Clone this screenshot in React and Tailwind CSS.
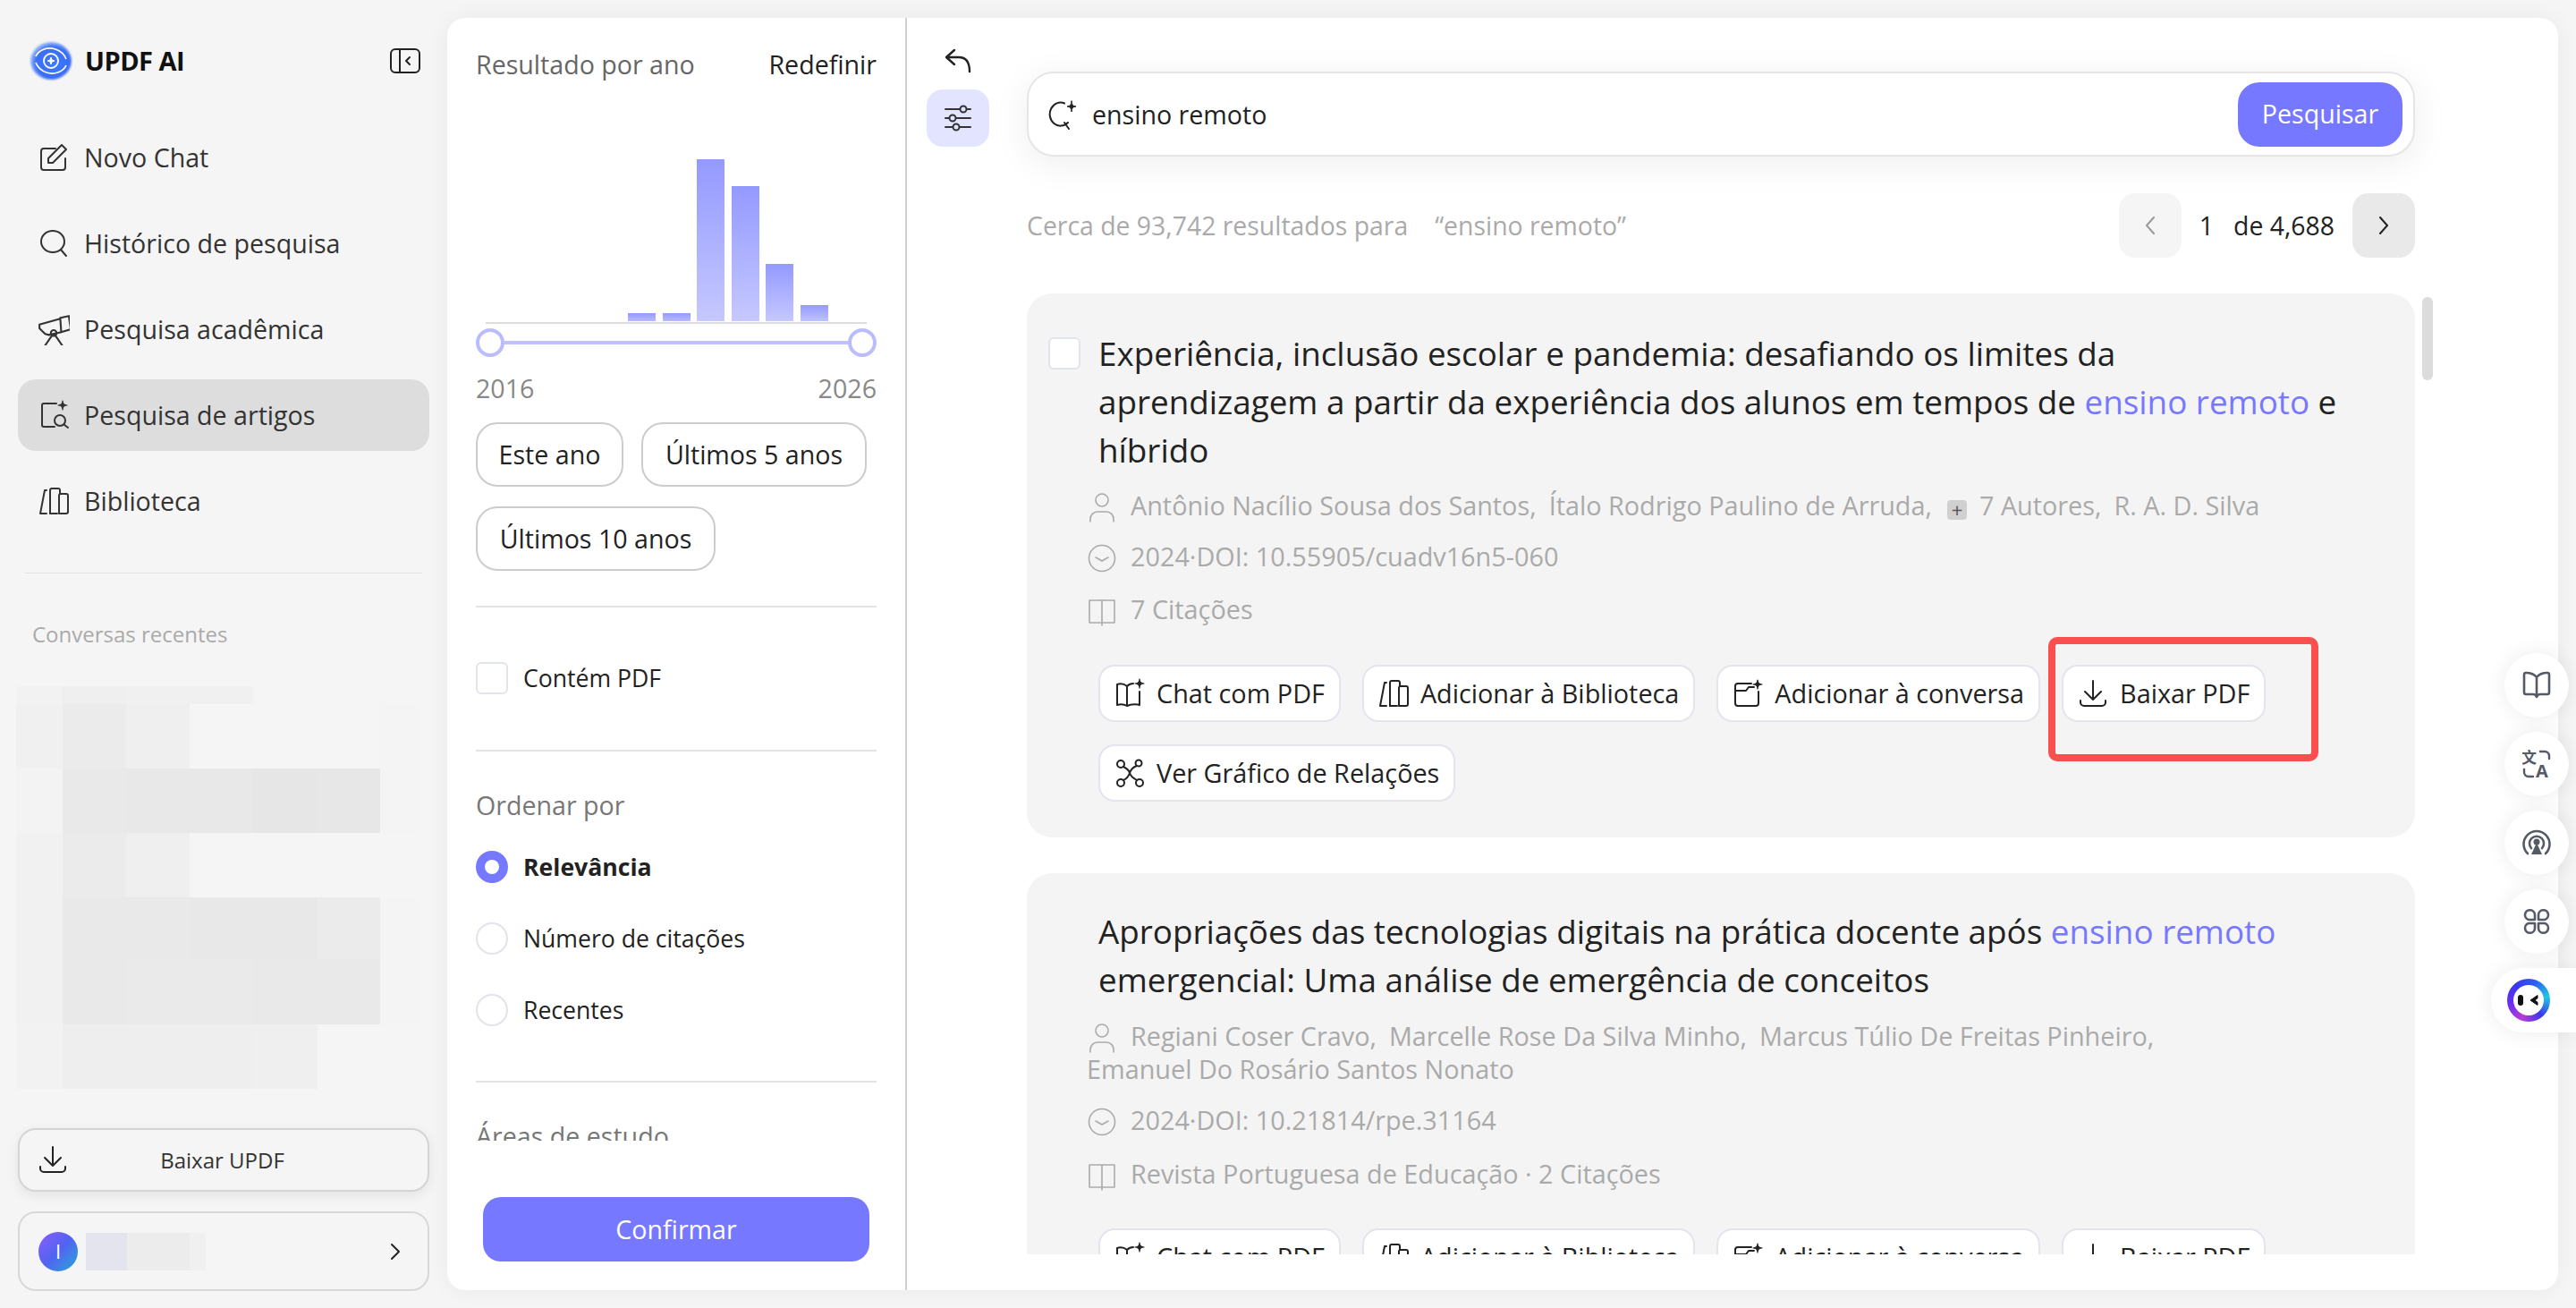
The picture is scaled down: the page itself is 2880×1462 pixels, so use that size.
import clsx from 'clsx';

const Icon = ({ children, size = 34, className }) => (
  <svg
    width={size}
    height={size}
    viewBox="0 0 34 34"
    fill="none"
    stroke="currentColor"
    strokeWidth="2"
    strokeLinecap="round"
    strokeLinejoin="round"
    className={clsx('shrink-0', className)}
  >
    {children}
  </svg>
);

const Sparkle = ({ x, y, r = 5 }) => (
  <path
    d={`M${x} ${y - r}Q${x} ${y} ${x + r} ${y}Q${x} ${y} ${x} ${y + r}Q${x} ${y} ${x - r} ${y}Q${x} ${y} ${x} ${y - r}Z`}
    fill="currentColor"
    strokeWidth="1.2"
  />
);

const NewChatIcon = () => (
  <Icon>
    <path d="M19 7H6a3 3 0 0 0-3 3v18a3 3 0 0 0 3 3h21a3 3 0 0 0 3-3V18" />
    <path d="M11 23v-5L26 3l5 5-15 15z" />
  </Icon>
);
const SearchIcon = () => (
  <Icon>
    <ellipse cx="16" cy="15" rx="13" ry="12" />
    <path d="M25 24l6 7" />
  </Icon>
);
const TelescopeIcon = () => (
  <Icon size={36}>
    <path d="M2 12l22-6 1 14-13 3-4-1-6-6z" />
    <path d="M24 5l9-2 2 14-10 3" />
    <circle cx="17" cy="21" r="3" />
    <path d="M15 24l-7 10M19 24l7 10" />
  </Icon>
);
const ArticleSearchIcon = () => (
  <Icon>
    <path d="M20 4H6a2 2 0 0 0-2 2v22a2 2 0 0 0 2 2h12" />
    <circle cx="24" cy="23" r="6" />
    <path d="M28.5 27.5l4.5 3.5" />
    <Sparkle x={27} y={6} r={5} />
  </Icon>
);
const LibraryIcon = () => (
  <Icon>
    <path d="M9 5H7L2 31h7" />
    <path d="M13 31V5a2 2 0 0 1 2-2h7a2 2 0 0 1 2 2v4" />
    <path d="M13 31h8M23 31V11a2 2 0 0 1 2-2h6a2 2 0 0 1 2 2v18a2 2 0 0 1-2 2z" />
  </Icon>
);
const DownloadIcon = () => (
  <Icon>
    <path d="M17 3v21M8 15l9 9 9-9" />
    <path d="M3 25v2a4 4 0 0 0 4 4h20a4 4 0 0 0 4-4v-2" />
  </Icon>
);
const BookSparkIcon = () => (
  <Icon>
    <path d="M14 9Q9 5 3 7v23q6-2 11 1V9zM14 9q3-3 7-3M14 31q6-3 14-1V15" />
    <Sparkle x={28} y={6} r={5} />
  </Icon>
);
const FolderSparkIcon = () => (
  <Icon>
    <path d="M21 6H6a3 3 0 0 0-3 3v19a3 3 0 0 0 3 3h20a3 3 0 0 0 3-3V15" />
    <path d="M3 14h12l3-4h6" />
    <Sparkle x={28} y={7} r={5} />
  </Icon>
);
const GraphIcon = () => (
  <Icon>
    <circle cx="7" cy="7" r="4" />
    <circle cx="27" cy="6" r="3.5" />
    <circle cx="7" cy="28" r="4" />
    <circle cx="28" cy="28" r="4" />
    <path d="M10 10q6 3 7 7t8 8M25 9q-6 2-8 8t-7 8" />
  </Icon>
);
const PersonIcon = () => (
  <Icon>
    <circle cx="17" cy="9" r="7" strokeWidth="1.6" />
    <path d="M4 33v-3a8 8 0 0 1 8-8h10a8 8 0 0 1 8 8v3" strokeWidth="1.6" />
  </Icon>
);
const ClockIcon = () => (
  <Icon>
    <circle cx="17" cy="17" r="14.5" strokeWidth="1.6" />
    <path d="M10 16l7 4 7-4" strokeWidth="1.6" />
  </Icon>
);
const BookIcon = () => (
  <Icon>
    <path d="M3 5h14v25H3zM17 5h14v25H17zM17 30v3" strokeWidth="1.6" />
  </Icon>
);

const Logo = () => (
  <svg width="50" height="48" viewBox="0 0 50 48" className="shrink-0">
    <defs>
      <radialGradient id="blob" cx="55%" cy="55%" r="60%">
        <stop offset="0%" stopColor="#3d7bff" />
        <stop offset="70%" stopColor="#3a6cf5" />
        <stop offset="100%" stopColor="#6aa5ff" stopOpacity="0.5" />
      </radialGradient>
    </defs>
    <ellipse cx="25" cy="24" rx="23" ry="21" fill="url(#blob)" className="blur-[1px]" />
    <g fill="none" stroke="#fff" strokeWidth="1.8">
      <circle cx="25" cy="24" r="8" />
      <path d="M8 19c3-7 13-11 22-8 6 2 10 6 12 11" />
      <path d="M42 29c-3 7-13 11-22 8-6-2-10-6-12-11" />
    </g>
    <path d="M25 20Q25 24 29 24Q25 24 25 28Q25 24 21 24Q25 24 25 20Z" fill="#fff" stroke="#fff" />
  </svg>
);

const navItems = [
  { label: 'Novo Chat', icon: NewChatIcon },
  { label: 'Histórico de pesquisa', icon: SearchIcon },
  { label: 'Pesquisa acadêmica', icon: TelescopeIcon },
  { label: 'Pesquisa de artigos', icon: ArticleSearchIcon, active: true },
  { label: 'Biblioteca', icon: LibraryIcon },
];

// pixelated block that hides the recent chats
const mosaicRows = [
  { h: 'h-[20px]', cells: ['bg-[#f2f2f2]', 'bg-[#efefef]', 'bg-[#f0f0f0]', 'bg-[#f0f0f0]', 'bg-[#f5f5f5]', 'bg-[#f5f5f5]', 'bg-[#f5f5f5]'] },
  { h: 'h-[72px]', cells: ['bg-[#f0f0f0]', 'bg-[#ebebeb]', 'bg-[#efefef]', 'bg-[#f5f5f5]', 'bg-[#f5f5f5]', 'bg-[#f5f5f5]', 'bg-[#f4f4f4]'] },
  { h: 'h-[72px]', cells: ['bg-[#f3f3f3]', 'bg-[#e9e9e9]', 'bg-[#e8e8e8]', 'bg-[#e8e8e8]', 'bg-[#e6e6e6]', 'bg-[#e7e7e7]', 'bg-[#f4f4f4]'] },
  { h: 'h-[72px]', cells: ['bg-[#f1f1f1]', 'bg-[#ebebeb]', 'bg-[#efefef]', 'bg-[#f5f5f5]', 'bg-[#f5f5f5]', 'bg-[#f5f5f5]', 'bg-[#f5f5f5]'] },
  { h: 'h-[70px]', cells: ['bg-[#f1f1f1]', 'bg-[#e9e9e9]', 'bg-[#e9e9e9]', 'bg-[#e8e8e8]', 'bg-[#e8e8e8]', 'bg-[#ebebeb]', 'bg-[#f4f4f4]'] },
  { h: 'h-[72px]', cells: ['bg-[#f1f1f1]', 'bg-[#e9e9e9]', 'bg-[#eaeaea]', 'bg-[#eaeaea]', 'bg-[#e9e9e9]', 'bg-[#e9e9e9]', 'bg-[#f4f4f4]'] },
  { h: 'h-[72px]', cells: ['bg-[#f2f2f2]', 'bg-[#eeeeee]', 'bg-[#eeeeee]', 'bg-[#eeeeee]', 'bg-[#efefef]', 'bg-[#f5f5f5]', 'bg-[#f5f5f5]'] },
];
const mosaicWidths = ['w-[52px]', 'w-[71px]', 'w-[71px]', 'w-[71px]', 'w-[72px]', 'w-[70px]', 'w-[45px]'];

function Sidebar() {
  return (
    <aside className="w-[500px] shrink-0 h-full flex flex-col">
      <div className="h-[48px] mt-[44px] pl-[32px] pr-[30px] flex items-center">
        <Logo />
        <span className="ml-[13px] text-[29px] font-bold text-[#111] tracking-[-0.5px]">UPDF AI</span>
        <svg width="34" height="28" viewBox="0 0 34 28" fill="none" stroke="#222" strokeWidth="2" className="ml-auto">
          <rect x="1" y="1" width="32" height="26" rx="5" />
          <path d="M11 1v26M22 10l-4 4 4 4" strokeLinecap="round" strokeLinejoin="round" />
        </svg>
      </div>

      <nav className="mt-[44px] px-[20px] flex flex-col gap-[16px]">
        {navItems.map(({ label, icon: NavIcon, active }) => (
          <div
            key={label}
            className={clsx(
              'h-[80px] rounded-[20px] pl-[22px] flex items-center text-[28.6px] text-[#333]',
              active && 'bg-[#dddddd]'
            )}
          >
            <span className="w-[36px] mr-[16px] flex justify-center">
              <NavIcon />
            </span>
            {label}
          </div>
        ))}
      </nav>

      <div className="mt-[40px] mx-[28px] h-[1px] bg-[#e2e2e2]" />
      <div className="mt-[50px] pl-[36px] h-[36px] leading-[36px] text-[24px] text-[#aaaaaa]">Conversas recentes</div>

      <div className="mt-[40px] ml-[18px]">
        {mosaicRows.map((row, i) => (
          <div key={i} className={clsx('flex', row.h)}>
            {row.cells.map((c, j) => (
              <div key={j} className={clsx(c, mosaicWidths[j])} />
            ))}
          </div>
        ))}
      </div>

      <button className="relative mt-[44px] mx-[20px] h-[71px] pr-[3px] rounded-[20px] border-2 border-[#d4d4d4] shadow-[0_4px_14px_rgba(0,0,0,0.08)] flex items-center justify-center text-[24px] text-[#333]">
        <span className="absolute left-[20px] top-[16px] text-[#222]">
          <DownloadIcon />
        </span>
        Baixar UPDF
      </button>

      <div className="mt-[22px] mx-[20px] h-[89px] rounded-[20px] border-2 border-[#d8d8d8] pl-[21px] pr-[30px] flex items-center">
        <div className="w-[44px] h-[44px] rounded-full bg-gradient-to-br from-[#8a5cff] via-[#4f63f0] to-[#0ea5d8] flex items-center justify-center text-white text-[22px]">
          I
        </div>
        <div className="ml-[9px] flex h-[42px]">
          <div className="w-[46px] bg-[#e4e4ee]" />
          <div className="w-[70px] bg-[#ececec]" />
          <div className="w-[18px] bg-[#f0f0f0]" />
        </div>
        <svg width="12" height="20" viewBox="0 0 12 20" fill="none" stroke="#222" strokeWidth="2" className="ml-auto">
          <path d="M2 2l8 8-8 8" strokeLinecap="round" strokeLinejoin="round" />
        </svg>
      </div>
    </aside>
  );
}

const bars = [
  { h: 'h-[9px]', c: 'to-[#b9bbff]' },
  { h: 'h-[9px]', c: 'to-[#b9bbff]' },
  { h: 'h-[181px]', c: 'to-[#c6c8ff]' },
  { h: 'h-[151px]', c: 'to-[#c6c8ff]' },
  { h: 'h-[64px]', c: 'to-[#c6c8ff]' },
  { h: 'h-[18px]', c: 'to-[#c0c2ff]' },
];

const Handle = () => <div className="w-[32px] h-[32px] rounded-full border-[4px] border-[#b9bcff] bg-white shrink-0" />;

const Chip = ({ children, className }) => (
  <button className={clsx('h-[72px] rounded-[24px] border-2 border-[#cccccc] text-[28.6px] text-[#222]', className)}>
    {children}
  </button>
);

const Radio = ({ label, checked, className }) => (
  <div className={clsx('h-[36px] flex items-center', className)}>
    {checked ? (
      <span className="w-[36px] h-[36px] rounded-full bg-[#7678ff] flex items-center justify-center">
        <span className="w-[16px] h-[16px] rounded-full bg-white" />
      </span>
    ) : (
      <span className="w-[36px] h-[36px] rounded-full border-2 border-[#e2e4ec] bg-white" />
    )}
    <span className={clsx('ml-[17px] pt-[2px] text-[26.6px] text-[#222]', checked && 'font-bold')}>{label}</span>
  </div>
);

function FilterPanel() {
  return (
    <div className="w-[514px] shrink-0 border-r-2 border-[#d0d0d0] flex flex-col">
      <div className="h-[1255px] overflow-hidden px-[32px] pt-[32px]">
        <div className="h-[40px] flex items-center justify-between text-[28.6px]">
          <span className="text-[#666666]">Resultado por ano</span>
          <span className="text-[#222]">Redefinir</span>
        </div>

        <div className="h-[270px] mx-[11px] border-b-2 border-[#dddddd] pb-[1px] pl-[159px] flex items-end gap-[7.6px]">
          {bars.map((b, i) => (
            <div key={i} className={clsx('w-[31px] bg-gradient-to-b from-[#9499ff]', b.h, b.c)} />
          ))}
        </div>

        <div className="mt-[5px] flex items-center">
          <Handle />
          <div className="flex-1 h-[4px] bg-[#bfc2ff]" />
          <Handle />
        </div>

        <div className="mt-[15px] h-[40px] flex items-center justify-between text-[28.6px] text-[#888888]">
          <span>2016</span>
          <span>2026</span>
        </div>

        <div className="mt-[18px] flex flex-wrap gap-x-[20px] gap-y-[22px]">
          <Chip className="w-[165px]">Este ano</Chip>
          <Chip className="w-[252px]">Últimos 5 anos</Chip>
          <Chip className="w-[268px]">Últimos 10 anos</Chip>
        </div>

        <div className="mt-[39px] h-[2px] bg-[#e3e3e3]" />

        <div className="mt-[61px] h-[36px] flex items-center">
          <span className="w-[36px] h-[36px] rounded-[6px] border-2 border-[#e2e4ec] bg-white" />
          <span className="ml-[17px] pt-[2px] text-[26.6px] text-[#222]">Contém PDF</span>
        </div>

        <div className="mt-[62px] h-[2px] bg-[#e3e3e3]" />

        <div className="mt-[40px] h-[40px] leading-[40px] text-[28.6px] text-[#777777]">Ordenar por</div>
        <Radio label="Relevância" checked className="mt-[31px]" />
        <Radio label="Número de citações" className="mt-[44px]" />
        <Radio label="Recentes" className="mt-[44px]" />

        <div className="mt-[61px] h-[2px] bg-[#e3e3e3]" />
        <div className="mt-[40px] h-[40px] leading-[40px] text-[28.6px] text-[#777777]">Áreas de estudo</div>
      </div>

      <div className="flex-1 px-[40px] pt-[63px]">
        <button className="w-[432px] h-[72px] rounded-[20px] bg-[#7678ff] text-white text-[28.6px]">Confirmar</button>
      </div>
    </div>
  );
}

const ActionButton = ({ icon: BtnIcon, children }) => (
  <button className="h-[64px] rounded-[18px] border-2 border-[#e4e4ee] bg-white pl-[16px] pr-[16px] flex items-center gap-[13px] text-[28.8px] text-[#222]">
    <BtnIcon />
    {children}
  </button>
);

const Actions = () => (
  <div className="w-[1440px] flex flex-wrap gap-x-[24px] gap-y-[25px]">
    <ActionButton icon={BookSparkIcon}>Chat com PDF</ActionButton>
    <ActionButton icon={LibraryIcon}>Adicionar à Biblioteca</ActionButton>
    <ActionButton icon={FolderSparkIcon}>Adicionar à conversa</ActionButton>
    <ActionButton icon={DownloadIcon}>Baixar PDF</ActionButton>
    <ActionButton icon={GraphIcon}>Ver Gráfico de Relações</ActionButton>
  </div>
);

const Meta = ({ icon: MetaIcon, children, className }) => (
  <p className={clsx('ml-[-13px] w-[1460px] text-[28.8px] leading-[37px] text-[#aaaaaa]', className)}>
    <span className="inline-block align-baseline -my-[8px] mr-[15px]">
      <MetaIcon />
    </span>
    {children}
  </p>
);

const Hl = ({ children }) => <span className="text-[#7678ff]">{children}</span>;

const Author = ({ children, className }) => <span className={clsx('mr-[14px]', className)}>{children}</span>;

function ResultCards() {
  return (
    <div className="relative flex-1 overflow-hidden mt-[40px] mb-[40px]">
      <div className="absolute left-[1560px] top-[4px] w-[12px] h-[93px] rounded-full bg-[#dcdcdc]" />

      <article className="relative w-[1552px] rounded-[28px] bg-[#f4f4f4] pl-[80px] pt-[40px] pb-[40px]">
        <span className="absolute left-[24px] top-[49px] w-[36px] h-[36px] rounded-[6px] border-2 border-[#e2e4ec] bg-white" />
        <h2 className="text-[36.8px] leading-[54px] text-[#222] font-normal">
          Experiência, inclusão escolar e pandemia: desafiando os limites da
          <br />
          aprendizagem a partir da experiência dos alunos em tempos de <Hl>ensino remoto</Hl> e
          <br />
          híbrido
        </h2>
        <Meta icon={PersonIcon} className="mt-[16px]">
          <Author>Antônio Nacílio Sousa dos Santos,</Author>
          <Author>Ítalo Rodrigo Paulino de Arruda,</Author>
          <span className="inline-flex w-[22px] h-[22px] ml-[3px] mr-[14px] rounded-[4px] bg-[#d0d0d0] text-[#555] text-[22px] leading-[20px] justify-center align-[-2px]">+</span>
          <Author className="mr-[10px]">7 Autores,</Author>
          <span>R. A. D. Silva</span>
        </Meta>
        <Meta icon={ClockIcon} className="mt-[20px]">2024·DOI: 10.55905/cuadv16n5-060</Meta>
        <Meta icon={BookIcon} className="mt-[22px]">7 Citações</Meta>
        <div className="mt-[44px]">
          <Actions />
        </div>
        <div className="absolute left-[1142px] top-[384px] w-[302px] h-[139px] rounded-[10px] border-[8px] border-[#f94f4f]" />
      </article>

      <article className="mt-[40px] w-[1552px] rounded-[28px] bg-[#f4f4f4] pl-[80px] pt-[38px] pb-[40px]">
        <h2 className="text-[36.8px] leading-[54px] text-[#222] font-normal">
          Apropriações das tecnologias digitais na prática docente após <Hl>ensino remoto</Hl>
          <br />
          emergencial: Uma análise de emergência de conceitos
        </h2>
        <Meta icon={PersonIcon} className="mt-[17px]">
          <Author>Regiani Coser Cravo,</Author>
          <Author>Marcelle Rose Da Silva Minho,</Author>
          <Author>Marcus Túlio De Freitas Pinheiro,</Author>
          <br />
          Emanuel Do Rosário Santos Nonato
        </Meta>
        <Meta icon={ClockIcon} className="mt-[20px]">2024·DOI: 10.21814/rpe.31164</Meta>
        <Meta icon={BookIcon} className="mt-[23px]">Revista Portuguesa de Educação · 2 Citações</Meta>
        <div className="mt-[43px]">
          <Actions />
        </div>
      </article>
    </div>
  );
}

function Content() {
  return (
    <div className="flex-1 flex min-w-0">
      <div className="w-[134px] shrink-0 pr-[20px] flex flex-col items-center pt-[34px]">
        <svg width="32" height="28" viewBox="0 0 32 28" fill="none" stroke="#222" strokeWidth="2.4" strokeLinecap="round" strokeLinejoin="round">
          <path d="M12 2L3 10l9 8M3 10h14c8 0 12 6 12 16" />
        </svg>
        <div className="mt-[18px] w-[70px] h-[64px] rounded-[18px] bg-[#e3e4ff] flex items-center justify-center">
          <svg width="32" height="30" viewBox="0 0 32 30" fill="none" stroke="#333" strokeWidth="2">
            <path d="M2 5h16M26 5h4M2 15h4M14 15h16M2 25h8M18 25h12" strokeLinecap="round" />
            <circle cx="22" cy="5" r="3.5" />
            <circle cx="10" cy="15" r="3.5" />
            <circle cx="14" cy="25" r="3.5" />
          </svg>
        </div>
      </div>

      <div className="flex-1 min-w-0 flex flex-col pt-[60px]">
        <div className="w-[1552px] h-[95px] rounded-[30px] border-2 border-[#e6e6e6] bg-white shadow-[0_8px_40px_rgba(0,0,0,0.07)] pl-[22px] pr-[12px] flex items-center">
          <svg width="32" height="34" viewBox="0 0 32 34" fill="none" stroke="#222" strokeWidth="2" strokeLinecap="round" className="shrink-0">
            <path d="M18 4.5A12 13 0 1 0 22 26" />
            <path d="M18 26l5 7" />
            <path d="M26 2Q26 8 31 8Q26 8 26 14Q26 8 21 8Q26 8 26 2Z" fill="#222" strokeWidth="1" />
          </svg>
          <span className="ml-[17px] pt-[1px] text-[28.6px] text-[#222]">ensino remoto</span>
          <button className="ml-auto w-[184px] h-[72px] rounded-[24px] bg-[#7678ff] text-white text-[28.6px]">Pesquisar</button>
        </div>

        <div className="mt-[41px] w-[1552px] h-[72px] flex items-center text-[28.4px]">
          <span className="pt-[1px] text-[#aaaaaa]">Cerca de 93,742 resultados para</span>
          <span className="ml-[30px] pt-[1px] text-[#aaaaaa]">“ensino remoto”</span>
          <div className="ml-auto flex items-center">
            <div className="w-[70px] h-[72px] rounded-[18px] bg-[#f5f5f5] flex items-center justify-center">
              <svg width="12" height="22" viewBox="0 0 12 22" fill="none" stroke="#999" strokeWidth="2" strokeLinecap="round" strokeLinejoin="round">
                <path d="M10 2L2 11l8 9" />
              </svg>
            </div>
            <span className="ml-[20px] pt-[1px] text-[#222]">1</span>
            <span className="ml-[22px] mr-[20px] pt-[1px] text-[#222]">de 4,688</span>
            <div className="w-[70px] h-[72px] rounded-[18px] bg-[#e9e9e9] flex items-center justify-center">
              <svg width="12" height="22" viewBox="0 0 12 22" fill="none" stroke="#222" strokeWidth="2" strokeLinecap="round" strokeLinejoin="round">
                <path d="M2 2l8 9-8 9" />
              </svg>
            </div>
          </div>
        </div>

        <ResultCards />
      </div>
    </div>
  );
}

const ToolCircle = ({ children }) => (
  <div className="w-[72px] h-[72px] rounded-full bg-white shadow-[0_0_24px_rgba(0,0,0,0.08)] flex items-center justify-center text-[#555a66]">
    {children}
  </div>
);

function FloatingTools() {
  return (
    <div className="absolute right-0 top-[730px] w-[95px] flex flex-col items-start gap-[16px]">
      <div className="ml-[15px] flex flex-col gap-[16px]">
        <ToolCircle>
          <svg width="32" height="32" viewBox="0 0 32 32" fill="none" stroke="currentColor" strokeWidth="2.6" strokeLinejoin="round" strokeLinecap="round">
            <path d="M16 7Q12 2 4 2a2 2 0 0 0-2 2v20a2 2 0 0 0 2 2h8q3 0 4 3 1-3 4-3h8a2 2 0 0 0 2-2V4a2 2 0 0 0-2-2q-8 0-12 5zM16 7v22" />
          </svg>
        </ToolCircle>
        <ToolCircle>
          <svg width="32" height="32" viewBox="0 0 32 32" fill="none" stroke="currentColor" strokeWidth="2.4" strokeLinecap="round">
            <text x="-1" y="15" fontSize="17" fontWeight="700" fill="currentColor" stroke="none" fontFamily="'Noto Sans CJK SC', sans-serif">文</text>
            <text x="15" y="31" fontSize="20" fontWeight="700" fill="currentColor" stroke="none" fontFamily="'Open Sans', sans-serif">A</text>
            <path d="M20 2h5a5 5 0 0 1 5 5v3M12 30H7a5 5 0 0 1-5-5v-3" />
          </svg>
        </ToolCircle>
        <ToolCircle>
          <svg width="32" height="32" viewBox="0 0 32 32" fill="none" stroke="currentColor" strokeWidth="2.6" strokeLinecap="round">
            <path d="M6 28A14.5 14.5 0 1 1 26 28" />
            <path d="M10 22A8 8 0 1 1 22 22" />
            <circle cx="16" cy="15" r="3.5" fill="currentColor" stroke="none" />
            <path d="M16 16l6 13H10z" fill="currentColor" stroke="none" />
          </svg>
        </ToolCircle>
        <ToolCircle>
          <svg width="32" height="32" viewBox="0 0 32 32" fill="none" stroke="currentColor" strokeWidth="2.6" strokeLinejoin="round">
            <path d="M14 14H7a5.5 5.5 0 1 1 7-5.5z" />
            <path d="M18 14h7a5.5 5.5 0 1 0-7-5.5z" />
            <path d="M14 18H7a5.5 5.5 0 1 0 7 5.5z" />
            <path d="M18 18h7a5.5 5.5 0 1 1-7 5.5z" />
          </svg>
        </ToolCircle>
      </div>
      <div className="w-[95px] h-[72px] rounded-l-full bg-white shadow-[0_0_24px_rgba(0,0,0,0.08)] pl-[18px] flex items-center">
        <div className="w-[48px] h-[48px] rounded-full bg-[conic-gradient(from_200deg,#b83bd6,#6a2ff0,#3a37ef,#2f5cf0,#22c7e0,#3a37ef,#b83bd6)] flex items-center justify-center">
          <div className="w-[34px] h-[34px] rounded-full bg-white flex items-center justify-center">
            <svg width="30" height="14" viewBox="0 0 30 14" fill="#111">
              <rect x="3" y="1" width="6" height="12" rx="3" />
              <path d="M25 1.5L17 7l8 5.5v-3.2L22 7l3-2.3z" stroke="#111" strokeLinejoin="round" />
            </svg>
          </div>
        </div>
      </div>
    </div>
  );
}

export default function App() {
  return (
    <div className="relative w-[2880px] h-[1462px] overflow-hidden bg-[#f5f5f5] flex font-['Open_Sans',sans-serif]">
      <Sidebar />
      <main className="flex-1 min-w-0 my-[20px] mr-[20px] rounded-[20px] bg-white shadow-[0_0_24px_rgba(0,0,0,0.05)] flex overflow-hidden">
        <FilterPanel />
        <Content />
      </main>
      <FloatingTools />
    </div>
  );
}
